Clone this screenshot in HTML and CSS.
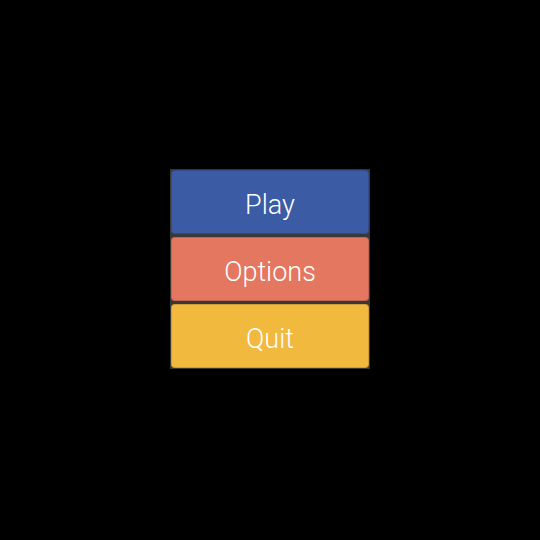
FILE: index.html
```html
<!DOCTYPE html>
<html>
<head>
<meta charset="utf-8">
<link rel="stylesheet" href="styles.css">
</head>
<body>
<div class="stage">
  <div class="menu">
    <button class="btn btn-play">Play</button>
    <button class="btn btn-options">Options</button>
    <button class="btn btn-quit">Quit</button>
  </div>
</div>
</body>
</html>
```
FILE: styles.css
```css
html, body {
  margin: 0;
  padding: 0;
  background: #000;
  width: 540px;
  height: 540px;
  overflow: hidden;
}
.stage {
  width: 540px;
  height: 540px;
  display: flex;
  justify-content: center;
  align-items: flex-start;
  padding-top: 169px;
  box-sizing: border-box;
}
.menu {
  width: 200px;
  height: 200px;
  box-sizing: border-box;
  background: #383838;
  padding: 1px;
  display: flex;
  flex-direction: column;
  gap: 3px;
}
.btn {
  flex: 1;
  border: none;
  border-radius: 4px;
  color: #fff;
  font-family: Roboto, "Noto Sans", sans-serif;
  font-size: 27px;
  font-weight: 300;
  padding: 5px 0 0 0;
  margin: 0;
  box-shadow: inset 0 0 0 1px rgba(0,0,0,0.15);
}
.btn-play { background: #3b5ba5; }
.btn-options { background: #e47760; }
.btn-quit { background: #f2b93f; }
```
